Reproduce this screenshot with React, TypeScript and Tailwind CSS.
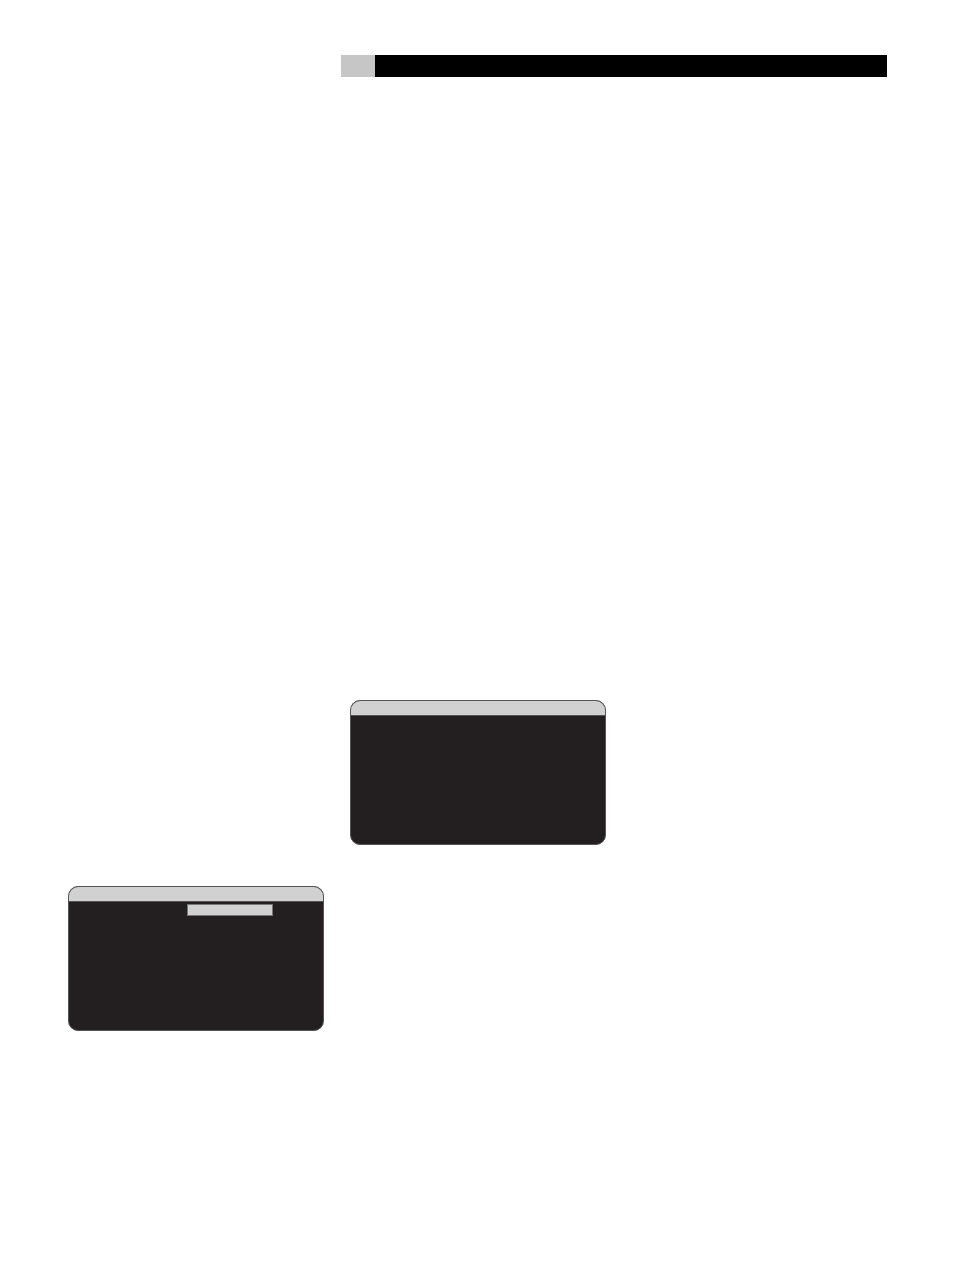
// OSD-style menu screens on a manual page
function Screen({ highlight = false }: { highlight?: boolean }) {
  return (
    <div className="flex h-[145px] w-[256px] flex-col overflow-hidden rounded-[10px] border border-[#555] bg-[#231f20]">
      <div className="h-[15px] shrink-0 border-b border-[#555] bg-[#d1d1d1]" />
      {highlight && (
        <div className="mt-[2px] ml-[118px] h-[12px] w-[86px] border border-[#777] bg-[#d1d1d1]" />
      )}
    </div>
  )
}

export default function App() {
  return (
    <div className="min-h-[1272px] w-[954px] bg-white pt-[55px]">
      <div className="ml-[341px] flex h-[22px] w-[546px]">
        <div className="w-[34px] bg-[#c6c6c6]" />
        <div className="flex-1 bg-black" />
      </div>

      <div className="mt-[623px] ml-[350px]">
        <Screen />
      </div>

      <div className="mt-[41px] ml-[68px]">
        <Screen highlight />
      </div>
    </div>
  )
}
